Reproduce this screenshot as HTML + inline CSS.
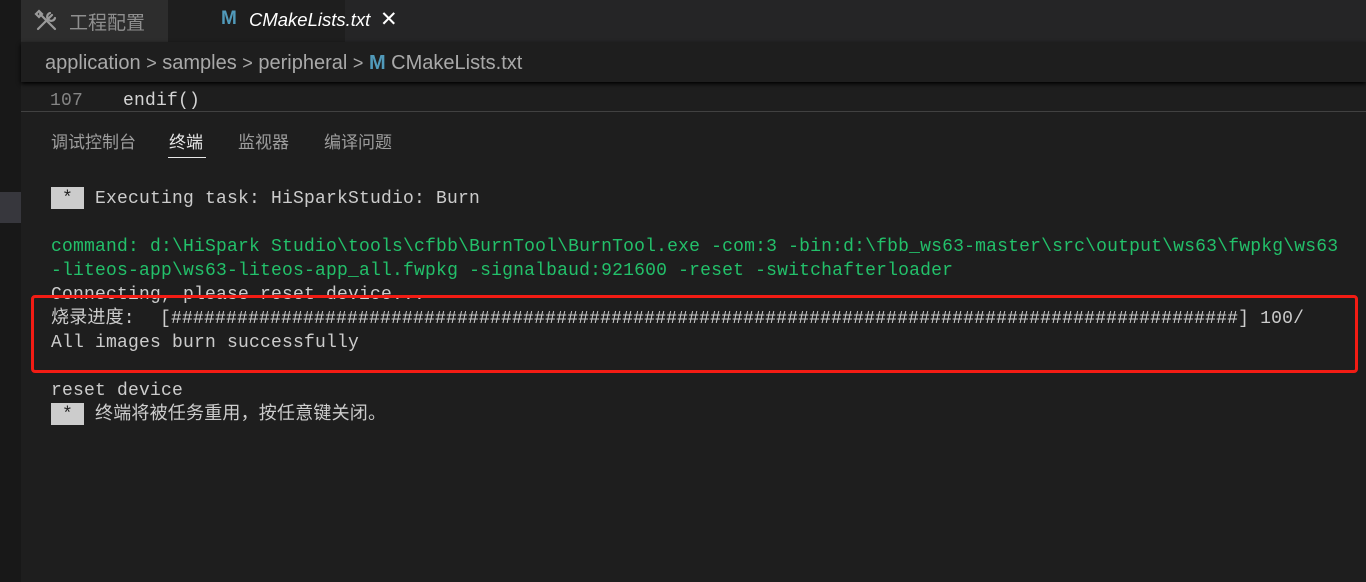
<!DOCTYPE html>
<html><head><meta charset="utf-8"><style>
body{margin:0;width:1366px;height:582px;background:#1e1e1e;overflow:hidden;position:relative;font-family:"Liberation Sans","Noto Sans CJK SC",sans-serif}
.a{position:absolute;white-space:pre}
.m{font-family:"Liberation Mono","Noto Sans CJK SC",monospace;font-size:18px;letter-spacing:0.2px;color:#cccccc;line-height:24px}
.g{color:#23c06a}
.c{color:#a9a9a9;font-size:18px}
</style></head><body>
<div class="a" style="left:0;top:0;width:21px;height:582px;background:#181818"></div>
<div class="a" style="left:0;top:192px;width:21px;height:31px;background:#37373d"></div>
<div class="a" style="left:21px;top:0;width:1345px;height:42px;background:#252526"></div>
<div class="a" style="left:21px;top:0;width:147px;height:42px;background:#2d2d2d"></div>
<div class="a" style="left:168px;top:0;width:177px;height:42px;background:#1e1e1e"></div>
<svg class="a" style="left:34px;top:9px" width="26" height="24" viewBox="0 0 26 24"><g stroke="#9a9a9a" stroke-width="2.2" fill="none" stroke-linecap="round"><path d="M4 20 L18 6"/><path d="M16 4 a4 4 0 1 0 5 5"/><path d="M6 5 L21 20"/><path d="M2 5 L5 2 L8 5 L5 8 Z"/></g></svg>
<div class="a" style="left:69px;top:8px;font-size:19px;color:#8f8f8f">工程配置</div>
<div class="a" style="left:221px;top:8px;font-size:19px;font-weight:bold;color:#519aba">M</div>
<div class="a" style="left:249px;top:9px;font-size:18.5px;font-style:italic;color:#ffffff">CMakeLists.txt</div>
<div class="a" style="left:380px;top:7px;font-size:21px;color:#ffffff">✕</div>
<div class="a" style="left:21px;top:42px;width:1345px;height:40px;background:#1e1e1e;box-shadow:0 2px 4px #000"></div>
<div class="a" style="left:45px;top:52px;font-size:20px;color:#a9a9a9">application <span class="c">&gt;</span> samples <span class="c">&gt;</span> peripheral <span class="c">&gt;</span> <b style="color:#519aba">M</b> CMakeLists.txt</div>
<div class="a m" style="left:50px;top:89px;color:#858585">107</div>
<div class="a m" style="left:123px;top:89px;color:#d4d4d4">endif()</div>
<div class="a" style="left:21px;top:111px;width:1345px;height:1px;background:#414141"></div>
<div class="a" style="left:51px;top:128px;font-size:17px;color:#9d9d9d">调试控制台</div>
<div class="a" style="left:169px;top:128px;font-size:17px;color:#e7e7e7">终端</div>
<div class="a" style="left:168px;top:157px;width:38px;height:1px;background:#e7e7e7"></div>
<div class="a" style="left:238px;top:128px;font-size:17px;color:#9d9d9d">监视器</div>
<div class="a" style="left:324px;top:128px;font-size:17px;color:#9d9d9d">编译问题</div>
<div class="a" style="left:51px;top:187px;width:33px;height:22px;background:#cccccc"></div>
<div class="a m" style="left:51px;top:187px;color:#1e1e1e;width:33px;text-align:center">*</div>
<div class="a m" style="left:95px;top:187px">Executing task: HiSparkStudio: Burn</div>
<div class="a m g" style="left:51px;top:235px">command: d:\HiSpark Studio\tools\cfbb\BurnTool\BurnTool.exe -com:3 -bin:d:\fbb_ws63-master\src\output\ws63\fwpkg\ws63</div>
<div class="a m g" style="left:51px;top:259px">-liteos-app\ws63-liteos-app_all.fwpkg -signalbaud:921600 -reset -switchafterloader</div>
<div class="a m" style="left:51px;top:283px">Connecting, please reset device...</div>
<div class="a m" style="left:51px;top:307px">烧录进度:</div>
<div class="a m" style="left:160px;top:307px">[#################################################################################################] 100/</div>
<div class="a m" style="left:51px;top:331px">All images burn successfully</div>
<div class="a m" style="left:51px;top:379px">reset device</div>
<div class="a" style="left:51px;top:403px;width:33px;height:22px;background:#cccccc"></div>
<div class="a m" style="left:51px;top:403px;color:#1e1e1e;width:33px;text-align:center">*</div>
<div class="a m" style="left:95px;top:403px">终端将被任务重用，按任意键关闭。</div>
<div class="a" style="left:31px;top:295px;width:1321px;height:72px;border:3px solid #f21c14;border-radius:4px"></div>
</body></html>
